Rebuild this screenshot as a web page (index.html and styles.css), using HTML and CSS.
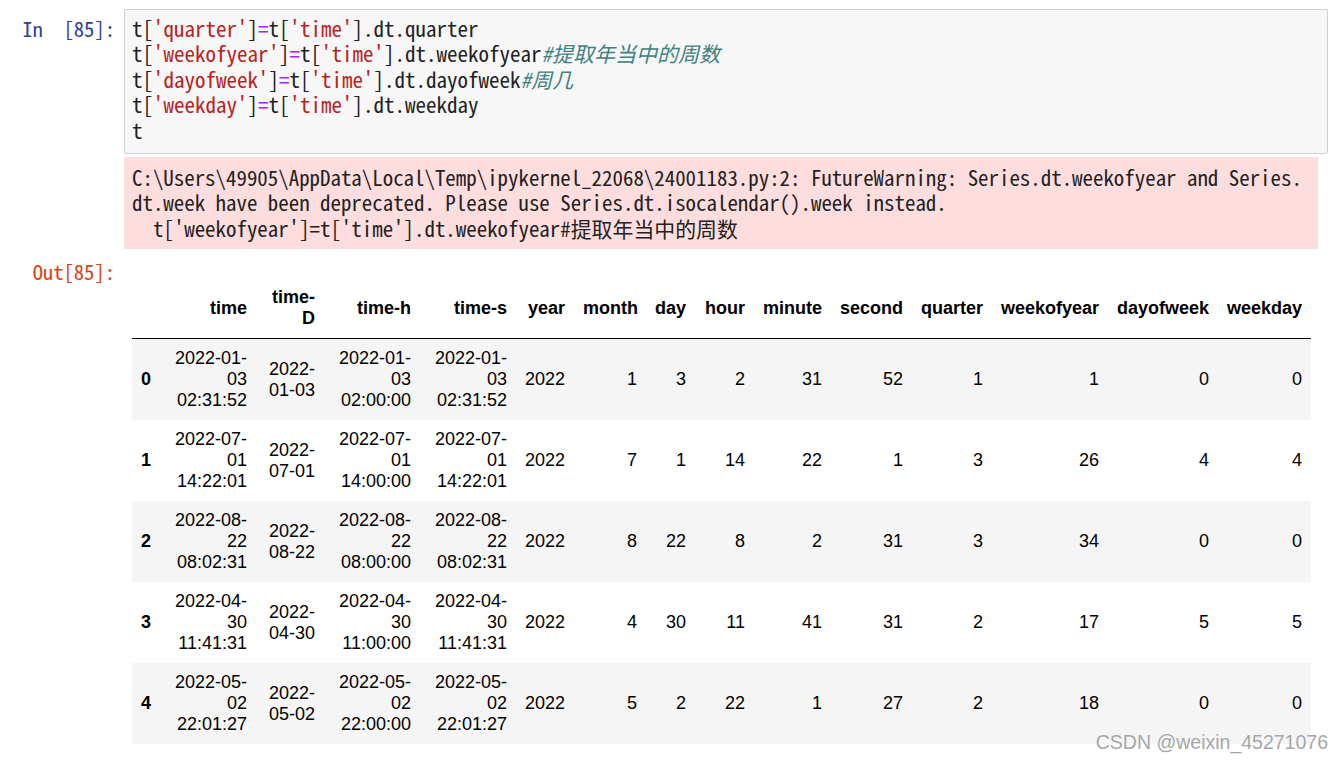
FILE: index.html
```html
<!DOCTYPE html>
<html lang="zh">
<head>
<meta charset="utf-8">
<title>Notebook</title>
<link rel="stylesheet" href="styles.css">
</head>
<body>
<div class="notebook">
  <div class="cell">
    <div class="input">
      <div class="prompt prompt-in">In&nbsp;&nbsp;[85]:</div>
      <div class="code"><div class="line">t[<span class="str">'quarter'</span>]<span class="op">=</span>t[<span class="str">'time'</span>].dt.quarter</div><div class="line">t[<span class="str">'weekofyear'</span>]<span class="op">=</span>t[<span class="str">'time'</span>].dt.weekofyear<span class="cm">#提取年当中的周数</span></div><div class="line">t[<span class="str">'dayofweek'</span>]<span class="op">=</span>t[<span class="str">'time'</span>].dt.dayofweek<span class="cm">#周几</span></div><div class="line">t[<span class="str">'weekday'</span>]<span class="op">=</span>t[<span class="str">'time'</span>].dt.weekday</div><div class="line">t</div></div>
    </div>
    <div class="out-row">
      <div class="prompt"></div>
      <div class="stderr"><div class="line">C:\Users\49905\AppData\Local\Temp\ipykernel_22068\24001183.py:2: FutureWarning: Series.dt.weekofyear and Series.</div><div class="line">dt.week have been deprecated. Please use Series.dt.isocalendar().week instead.</div><div class="line">  t['weekofyear']=t['time'].dt.weekofyear#提取年当中的周数</div></div>
    </div>
    <div class="out-row out-result">
      <div class="prompt prompt-out">Out[85]:</div>
      <div class="result">
        <table class="df">
          <colgroup>
            <col class="c-idx"><col class="c-dt"><col class="c-d"><col class="c-dt"><col class="c-dt">
            <col class="c-year"><col class="c-month"><col class="c-day"><col class="c-hour"><col class="c-minute">
            <col class="c-second"><col class="c-quarter"><col class="c-woy"><col class="c-dow"><col class="c-wd">
          </colgroup>
          <thead>
            <tr><th></th><th>time</th><th>time-<br>D</th><th>time-h</th><th>time-s</th><th>year</th><th>month</th><th>day</th><th>hour</th><th>minute</th><th>second</th><th>quarter</th><th>weekofyear</th><th>dayofweek</th><th>weekday</th></tr>
          </thead>
          <tbody>
            <tr><th>0</th><td>2022-01-<br>03<br>02:31:52</td><td>2022-<br>01-03</td><td>2022-01-<br>03<br>02:00:00</td><td>2022-01-<br>03<br>02:31:52</td><td>2022</td><td>1</td><td>3</td><td>2</td><td>31</td><td>52</td><td>1</td><td>1</td><td>0</td><td>0</td></tr>
            <tr><th>1</th><td>2022-07-<br>01<br>14:22:01</td><td>2022-<br>07-01</td><td>2022-07-<br>01<br>14:00:00</td><td>2022-07-<br>01<br>14:22:01</td><td>2022</td><td>7</td><td>1</td><td>14</td><td>22</td><td>1</td><td>3</td><td>26</td><td>4</td><td>4</td></tr>
            <tr><th>2</th><td>2022-08-<br>22<br>08:02:31</td><td>2022-<br>08-22</td><td>2022-08-<br>22<br>08:00:00</td><td>2022-08-<br>22<br>08:02:31</td><td>2022</td><td>8</td><td>22</td><td>8</td><td>2</td><td>31</td><td>3</td><td>34</td><td>0</td><td>0</td></tr>
            <tr><th>3</th><td>2022-04-<br>30<br>11:41:31</td><td>2022-<br>04-30</td><td>2022-04-<br>30<br>11:00:00</td><td>2022-04-<br>30<br>11:41:31</td><td>2022</td><td>4</td><td>30</td><td>11</td><td>41</td><td>31</td><td>2</td><td>17</td><td>5</td><td>5</td></tr>
            <tr><th>4</th><td>2022-05-<br>02<br>22:01:27</td><td>2022-<br>05-02</td><td>2022-05-<br>02<br>22:00:00</td><td>2022-05-<br>02<br>22:01:27</td><td>2022</td><td>5</td><td>2</td><td>22</td><td>1</td><td>27</td><td>2</td><td>18</td><td>0</td><td>0</td></tr>
          </tbody>
        </table>
      </div>
    </div>
  </div>
</div>
<div class="watermark">CSDN @weixin_45271076</div>
</body>
</html>
```

FILE: styles.css
```css
html, body {
  margin: 0;
  padding: 0;
  background: #ffffff;
}

.notebook {
  padding-top: 9px;
  position: relative;
}

.input,
.out-row {
  display: flex;
  align-items: flex-start;
}

.prompt {
  flex: 0 0 124px;
  width: 124px;
  box-sizing: border-box;
  padding-right: 9px;
  text-align: right;
  font-family: "Noto Sans Mono CJK SC", "Liberation Mono", monospace;
  font-size: 20.6px;
  line-height: 25.4px;
  white-space: nowrap;
}

.prompt-in {
  color: #303f9f;
  padding-top: 7px;
}

.prompt-out {
  color: #d84315;
}

.code {
  width: 1204px;
  box-sizing: border-box;
  background: #f7f7f7;
  border: 1px solid #cfcfcf;
  border-radius: 2px;
  padding: 6px 7px 10px 7px;
  font-family: "Noto Sans Mono CJK SC", "Liberation Mono", monospace;
  font-size: 21px;
  line-height: 25.4px;
  color: #222222;
  white-space: pre;
}

.line {
  height: 25.4px;
}

.str { color: #ba2121; }
.op { color: #aa22ff; }
.cm { color: #408080; font-style: italic; }

.stderr {
  margin-top: 3px;
  width: 1194px;
  box-sizing: border-box;
  background: #fddddd;
  padding: 8px 8px;
  font-family: "Noto Sans Mono CJK SC", "Liberation Mono", monospace;
  font-size: 20.9px;
  line-height: 25.4px;
  color: #222222;
  white-space: pre;
}

.out-result {
  margin-top: 10px;
}

.result {
  padding-top: 19px;
  padding-left: 8px;
}

.df {
  table-layout: fixed;
  width: 1179px;
  border-collapse: collapse;
  border-spacing: 0;
  font-family: "Liberation Sans", Arial, sans-serif;
  font-size: 18px;
  line-height: 21px;
  color: #000000;
}

.df th,
.df td {
  padding: 9px;
  text-align: right;
  vertical-align: middle;
  white-space: nowrap;
}

.df th {
  font-weight: bold;
}

.df tbody th {
  text-align: left;
}

.df thead th {
  border-bottom: 1px solid #000000;
}

.df tbody tr:nth-child(odd) {
  background: #f5f5f5;
}

.c-idx { width: 28px; }
.c-dt { width: 96px; }
.c-d { width: 68px; }
.c-year { width: 58px; }
.c-month { width: 72px; }
.c-day { width: 49px; }
.c-hour { width: 59px; }
.c-minute { width: 77px; }
.c-second { width: 81px; }
.c-quarter { width: 80px; }
.c-woy { width: 116px; }
.c-dow { width: 110px; }
.c-wd { width: 93px; }

.watermark {
  position: absolute;
  right: 16px;
  top: 730px;
  font-family: "Liberation Sans", Arial, sans-serif;
  font-size: 19.5px;
  line-height: 24px;
  color: #a6a6a6;
  text-shadow: 0 0 1px #ffffff;
  white-space: nowrap;
}
```
